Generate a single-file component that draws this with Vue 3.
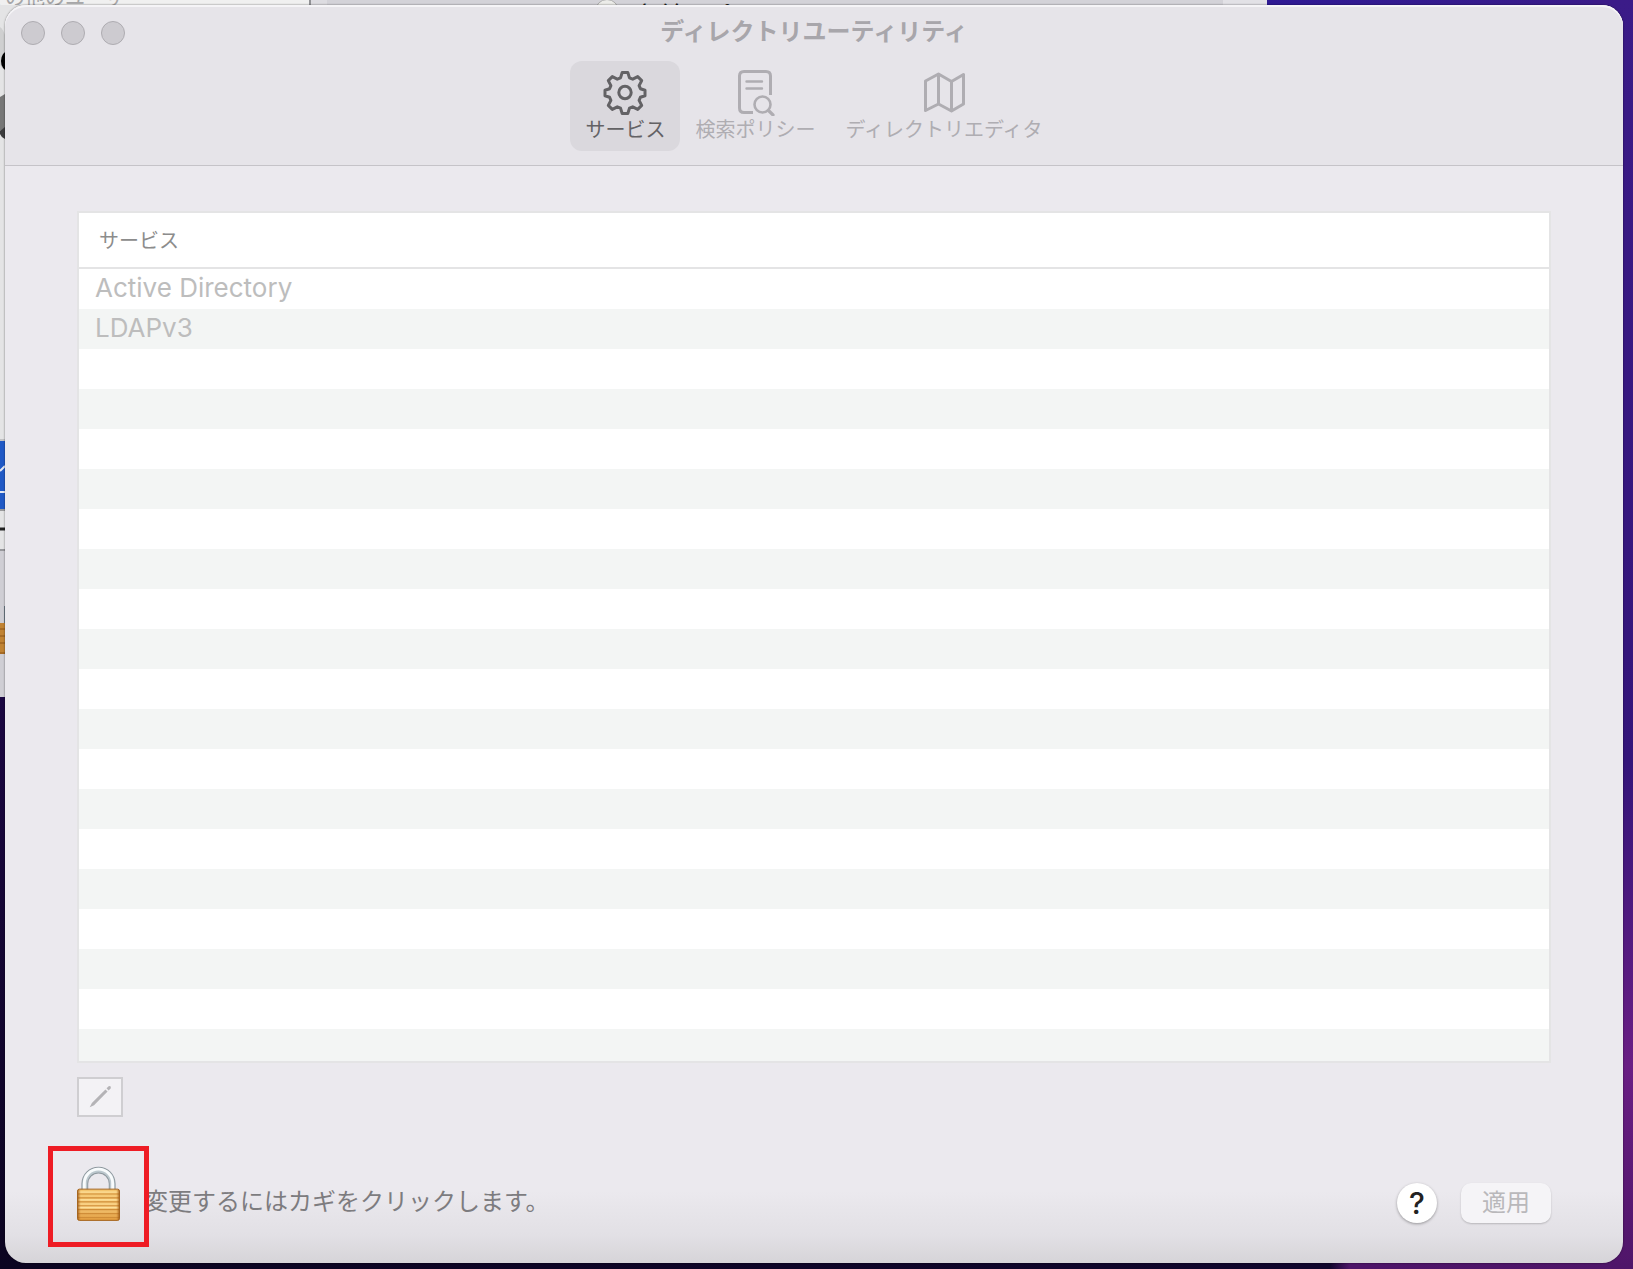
<script setup>
import { ref } from 'vue'

const tabs = [
  { id: 'services', label: 'サービス' },
  { id: 'policy', label: '検索ポリシー' },
  { id: 'editor', label: 'ディレクトリエディタ' },
]
const current = ref('services')
const services = ['Active Directory', 'LDAPv3']
</script>

<template>
  <div class="desktop">
    <!-- the window that sits behind this one -->
    <svg class="behind-edge" width="40" height="697" viewBox="0 0 40 697" aria-hidden="true">
      <rect width="40" height="697" fill="#e4e4e5" />
      <path d="M0 27q3 2 5 8v35q-4-2-5-6z" fill="#cfcfd0" />
      <ellipse cx="8" cy="61" rx="7" ry="10" fill="#000" />
      <path d="M0 97l5-3v34l-5 3z" fill="#777" />
      <path d="M0 131l5-4v12q-4-2-5-5z" fill="#3c3c3e" />
      <path d="M0 440h5" stroke="#a3a3a5" />
      <path d="M0 441h5v68H0z" fill="#2059c6" />
      <path d="M0 471l5-5M0 492h5" stroke="#e3e8f4" stroke-width="2" />
      <path d="M0 510h5" stroke="#9a9a9c" stroke-width="2" />
      <path d="M0 529h5" stroke="#222" stroke-width="3" />
      <path d="M0 550h5v147H0z" fill="#cfced4" />
      <path d="M0 550h5" stroke="#98989c" stroke-width="2" />
      <path d="M4 606h1v17H4z" fill="#6f7c86" />
      <path d="M0 623h5v31H0z" fill="#c18333" />
      <path d="M0 629h5M0 636h5M0 643h5M0 653h5" stroke="#8e5518" />
    </svg>
    <div class="behind" aria-hidden="true">
      <div class="behind-side">その他のユーザ</div>
      <div class="behind-main">
        <span class="behind-radio"></span>
        <span class="behind-label">名前とパスワード</span>
      </div>
    </div>

    <main class="window">
      <header class="top">
        <div class="titlebar">
          <div class="lights">
            <button type="button" class="light" aria-label="閉じる"></button>
            <button type="button" class="light" aria-label="しまう"></button>
            <button type="button" class="light" aria-label="拡大"></button>
          </div>
          <h1 class="title">ディレクトリユーティリティ</h1>
        </div>
        <nav class="toolbar">
          <button
            v-for="tab in tabs"
            :key="tab.id"
            type="button"
            class="tab"
            :class="{ active: tab.id === current }"
            @click="current = tab.id"
          >
            <svg v-if="tab.id === 'services'" class="icon" viewBox="0 0 48 48">
              <path
                d="M21.200 4.500h5.600l1.700 5.400 3.200 1.300 5-2.600 4 4-2.600 5 1.300 3.100 4.600 1.500v5.600l-4.600 1.500-1.300 3.100 2.600 5-4 4-5-2.600-3.200 1.300-1.700 5.400h-5.600l-1.700-5.400-3.200-1.300-5 2.600-4-4 2.600-5-1.300-3.100-4.600-1.500v-5.600l4.600-1.500 1.300-3.100-2.600-5 4-4 5 2.600 3.200-1.300z"
              />
              <circle cx="24" cy="24.500" r="6.200" />
            </svg>
            <svg v-else-if="tab.id === 'policy'" class="icon" viewBox="0 0 48 48">
              <path d="M22 44.500h-9q-4.500 0-4.500-4.500V8q0-4.500 4.500-4.500h22q4.500 0 4.500 4.500v19" />
              <path d="M15.500 13.500h15.500M15.500 20.500h15.500" stroke-width="2.400" stroke-linecap="round" />
              <circle cx="31.500" cy="36.500" r="8" stroke-width="2.600" />
              <path d="M37.500 42.500l4.500 4.500" stroke-width="3.200" stroke-linecap="round" />
            </svg>
            <svg v-else class="icon" viewBox="0 0 48 48">
              <path d="M5.500 13L18.500 6l13 7.500 12-7V36l-12 7-13-7-13 6.500zM18.500 6v30M31.500 13.500V43" />
            </svg>
            <span>{{ tab.label }}</span>
          </button>
        </nav>
      </header>

      <section class="content">
        <div class="list">
          <table>
            <thead>
              <tr><th scope="col">サービス</th></tr>
            </thead>
            <tbody>
              <tr v-for="name in services" :key="name"><td>{{ name }}</td></tr>
            </tbody>
          </table>
        </div>

        <button type="button" class="edit" aria-label="編集">
          <svg width="26" height="26" viewBox="0 0 24 24">
            <path d="M2.500 21.500L4.500 17.500L17 5L19 7L6.500 19.500z" />
            <path d="M18 4L20 2Q22.500 1.500 22 4L20 6z" />
          </svg>
        </button>

        <footer class="bottom">
          <button id="lock" type="button" class="lock" aria-label="カギ">
            <svg width="43" height="57" viewBox="0 0 44 58">
              <defs>
                <linearGradient id="brass" x1="0" y1="0" x2="0" y2="1">
                  <stop offset="0" stop-color="#f3c46c" />
                  <stop offset=".5" stop-color="#f9d083" />
                  <stop offset="1" stop-color="#e09a3c" />
                </linearGradient>
                <linearGradient id="side" x1="0" y1="0" x2="1" y2="0">
                  <stop offset="0" stop-color="#8a4a10" stop-opacity=".8" />
                  <stop offset=".08" stop-color="#c47722" stop-opacity="0" />
                  <stop offset=".92" stop-color="#c47722" stop-opacity="0" />
                  <stop offset="1" stop-color="#8a4a10" stop-opacity=".8" />
                </linearGradient>
              </defs>
              <path d="M8 26V18a14 14 0 0 1 28 0V26" class="shackle-line" />
              <path d="M8 26V18a14 14 0 0 1 28 0V26" class="shackle" />
              <path d="M7.500 26V17.500a14.500 14.500 0 0 1 29 0V26" class="shackle-shine" />
              <rect x=".5" y="23.500" width="43" height="32" rx="2" fill="url(#brass)" />
              <path
                d="M1 28.500h42M1 32.500h42M1 36.500h42M1 40.500h42M1 44.500h42M1 48.500h42M1 52.500h42"
                stroke="#d08d38"
                stroke-width="1.200"
              />
              <path d="M1 26.500h42M1 34.500h42M1 42.500h42" stroke="#ffe5a4" />
              <rect x=".5" y="23.500" width="43" height="32" rx="2" fill="url(#side)" stroke="#a4641f" />
            </svg>
            <span class="marker"></span>
          </button>
          <label class="hint" for="lock">変更するにはカギをクリックします。</label>
          <button type="button" class="help" aria-label="ヘルプ">?</button>
          <button type="button" class="apply" disabled>適用</button>
        </footer>
      </section>
    </main>
  </div>
</template>

<style>
body {
  margin: 0;
}
</style>

<style scoped>
* {
  box-sizing: border-box;
}

button {
  margin: 0;
  padding: 0;
  border: 0;
  background: none;
  color: inherit;
  font: inherit;
}

.desktop {
  position: relative;
  display: flex;
  min-height: 100vh;
  padding: 5px 10px 6px 5px;
  overflow: hidden;
  background:
    linear-gradient(90deg, #0b0420 0, #10052c 1330px, #4d1468 1350px, #4f1569 100%) bottom / 100% 6px no-repeat,
    linear-gradient(180deg, #3b1b88 0, #34157a 60%, #6a1e84 84%, #4f1569 100%) right / 40px 100% no-repeat,
    linear-gradient(90deg, #2f1a94 0, #3b1b88 100%) top right / 366px 60px no-repeat,
    linear-gradient(180deg, #1b0742 0, #1b0742 55%, #0b0420 100%);
  font-family: Inter, "Noto Sans CJK JP", sans-serif;
}

.behind {
  position: absolute;
  top: 0;
  left: 0;
  display: flex;
  width: 1267px;
  height: 5px;
  overflow: hidden;
}

.behind-side {
  display: flex;
  align-items: flex-end;
  width: 311px;
  height: 30px;
  margin-top: -17px;
  border-right: 2px solid #929296;
  background: #f0f0f0;
  color: #a6a6a8;
  font-size: 20px;
  line-height: 30px;
  text-indent: -15px;
}

.behind-main {
  position: relative;
  flex: 1;
  height: 30px;
  background: linear-gradient(90deg, #dddce1 16px, #d3d2d8 16px, #d3d2d8 912px, #e2e1e6 912px);
}

.behind-radio {
  position: absolute;
  top: -1px;
  left: 284px;
  width: 24px;
  height: 24px;
  border: 1px solid #aaa;
  border-radius: 50%;
  background: #ecece9;
}

.behind-label {
  position: absolute;
  top: 0;
  left: 324px;
  color: #222;
  font-size: 24px;
  line-height: 32px;
  white-space: nowrap;
}

.behind-edge {
  position: absolute;
  top: 0;
  left: 0;
}

.window {
  position: relative;
  display: flex;
  flex: 1;
  flex-direction: column;
  min-width: 0;
  border-radius: 21px;
  background: linear-gradient(0deg, #d6d4d8 0, #e2e0e5 28px, #ebe9ee 72px);
  box-shadow: 0 0 2px rgba(0, 0, 0, 0.6);
}

.top {
  padding: 16px 16px 14px;
  border-bottom: 1px solid #c5c3c8;
  border-radius: 21px 21px 0 0;
  background: #e6e4e9;
  box-shadow: inset 0 2px 0 #f5f4f7;
}

.titlebar {
  display: grid;
  grid-template-columns: 1fr auto 1fr;
  align-items: start;
  height: 24px;
}

.lights {
  display: flex;
  gap: 16px;
}

.light {
  width: 24px;
  height: 24px;
  border: 1px solid #aeacb1;
  border-radius: 50%;
  background: #cdcbd0;
}

.title {
  margin: 0;
  color: #a8a6ab;
  font-size: 24px;
  font-weight: 700;
  line-height: 22px;
}

.toolbar {
  display: flex;
  justify-content: center;
  margin-top: 16px;
}

.tab {
  display: flex;
  flex-direction: column;
  align-items: center;
  height: 90px;
  padding: 7px 15px 0;
  border-radius: 12px;
  color: #afadb2;
  font-size: 20px;
  line-height: 28px;
  white-space: nowrap;
}

.tab.active {
  background: #dad8dd;
  color: #636265;
}

.icon {
  width: 48px;
  height: 48px;
  fill: none;
  stroke: currentColor;
  stroke-width: 3;
  stroke-linejoin: round;
}

.content {
  display: flex;
  flex: 1;
  flex-direction: column;
  padding: 45px 72px 40px;
}

.list {
  flex: 1;
  min-height: 300px;
  border: 2px solid #e4e4e5;
  background: repeating-linear-gradient(180deg, #fff 0, #fff 40px, #f3f5f4 40px, #f3f5f4 80px) 0 56px;
}

table {
  width: 100%;
  border-collapse: separate;
  border-spacing: 0;
}

th {
  height: 56px;
  padding: 2px 20px 0;
  border-bottom: 2px solid #e4e4e5;
  background: #fff;
  color: #8c8c8c;
  font-size: 20px;
  font-weight: 400;
  line-height: 24px;
  text-align: left;
}

td {
  height: 40px;
  padding: 0 16px 2px;
  color: #bdbdbd;
  font-size: 26px;
  line-height: 38px;
}

.edit {
  display: flex;
  align-items: center;
  justify-content: center;
  width: 46px;
  height: 40px;
  margin-top: 14px;
  border: 2px solid #cfced1;
  background: #f3f2f5;
}

.edit path {
  fill: #b4b3b6;
}

.bottom {
  display: flex;
  align-items: flex-end;
  margin-top: 49px;
}

.lock {
  position: relative;
  z-index: 1;
  display: flex;
  margin-right: 24px;
}

.shackle-line,
.shackle,
.shackle-shine {
  fill: none;
  stroke: #8e989e;
  stroke-width: 7;
}

.shackle {
  stroke: #bcc8ce;
  stroke-width: 5;
}

.shackle-shine {
  stroke: #f8fbfc;
  stroke-width: 3;
}

.marker {
  position: absolute;
  inset: -20px -29px -24px -29px;
  border: 5px solid #ee1c24;
}

.hint {
  flex: 1;
  color: #7d7c7f;
  font-size: 24px;
  line-height: 42px;
}

.help {
  width: 40px;
  height: 40px;
  border-radius: 50%;
  background: #fff;
  box-shadow: 0 1px 3px rgba(0, 0, 0, 0.35);
  color: #222;
  font-size: 30px;
  font-weight: 500;
  line-height: 40px;
}

.apply {
  width: 90px;
  height: 40px;
  margin-left: 24px;
  border-radius: 10px;
  background: #f5f4f7;
  box-shadow: 0 1px 2px rgba(0, 0, 0, 0.2);
  color: #b9b8bb;
  font-size: 24px;
  line-height: 40px;
}
</style>
